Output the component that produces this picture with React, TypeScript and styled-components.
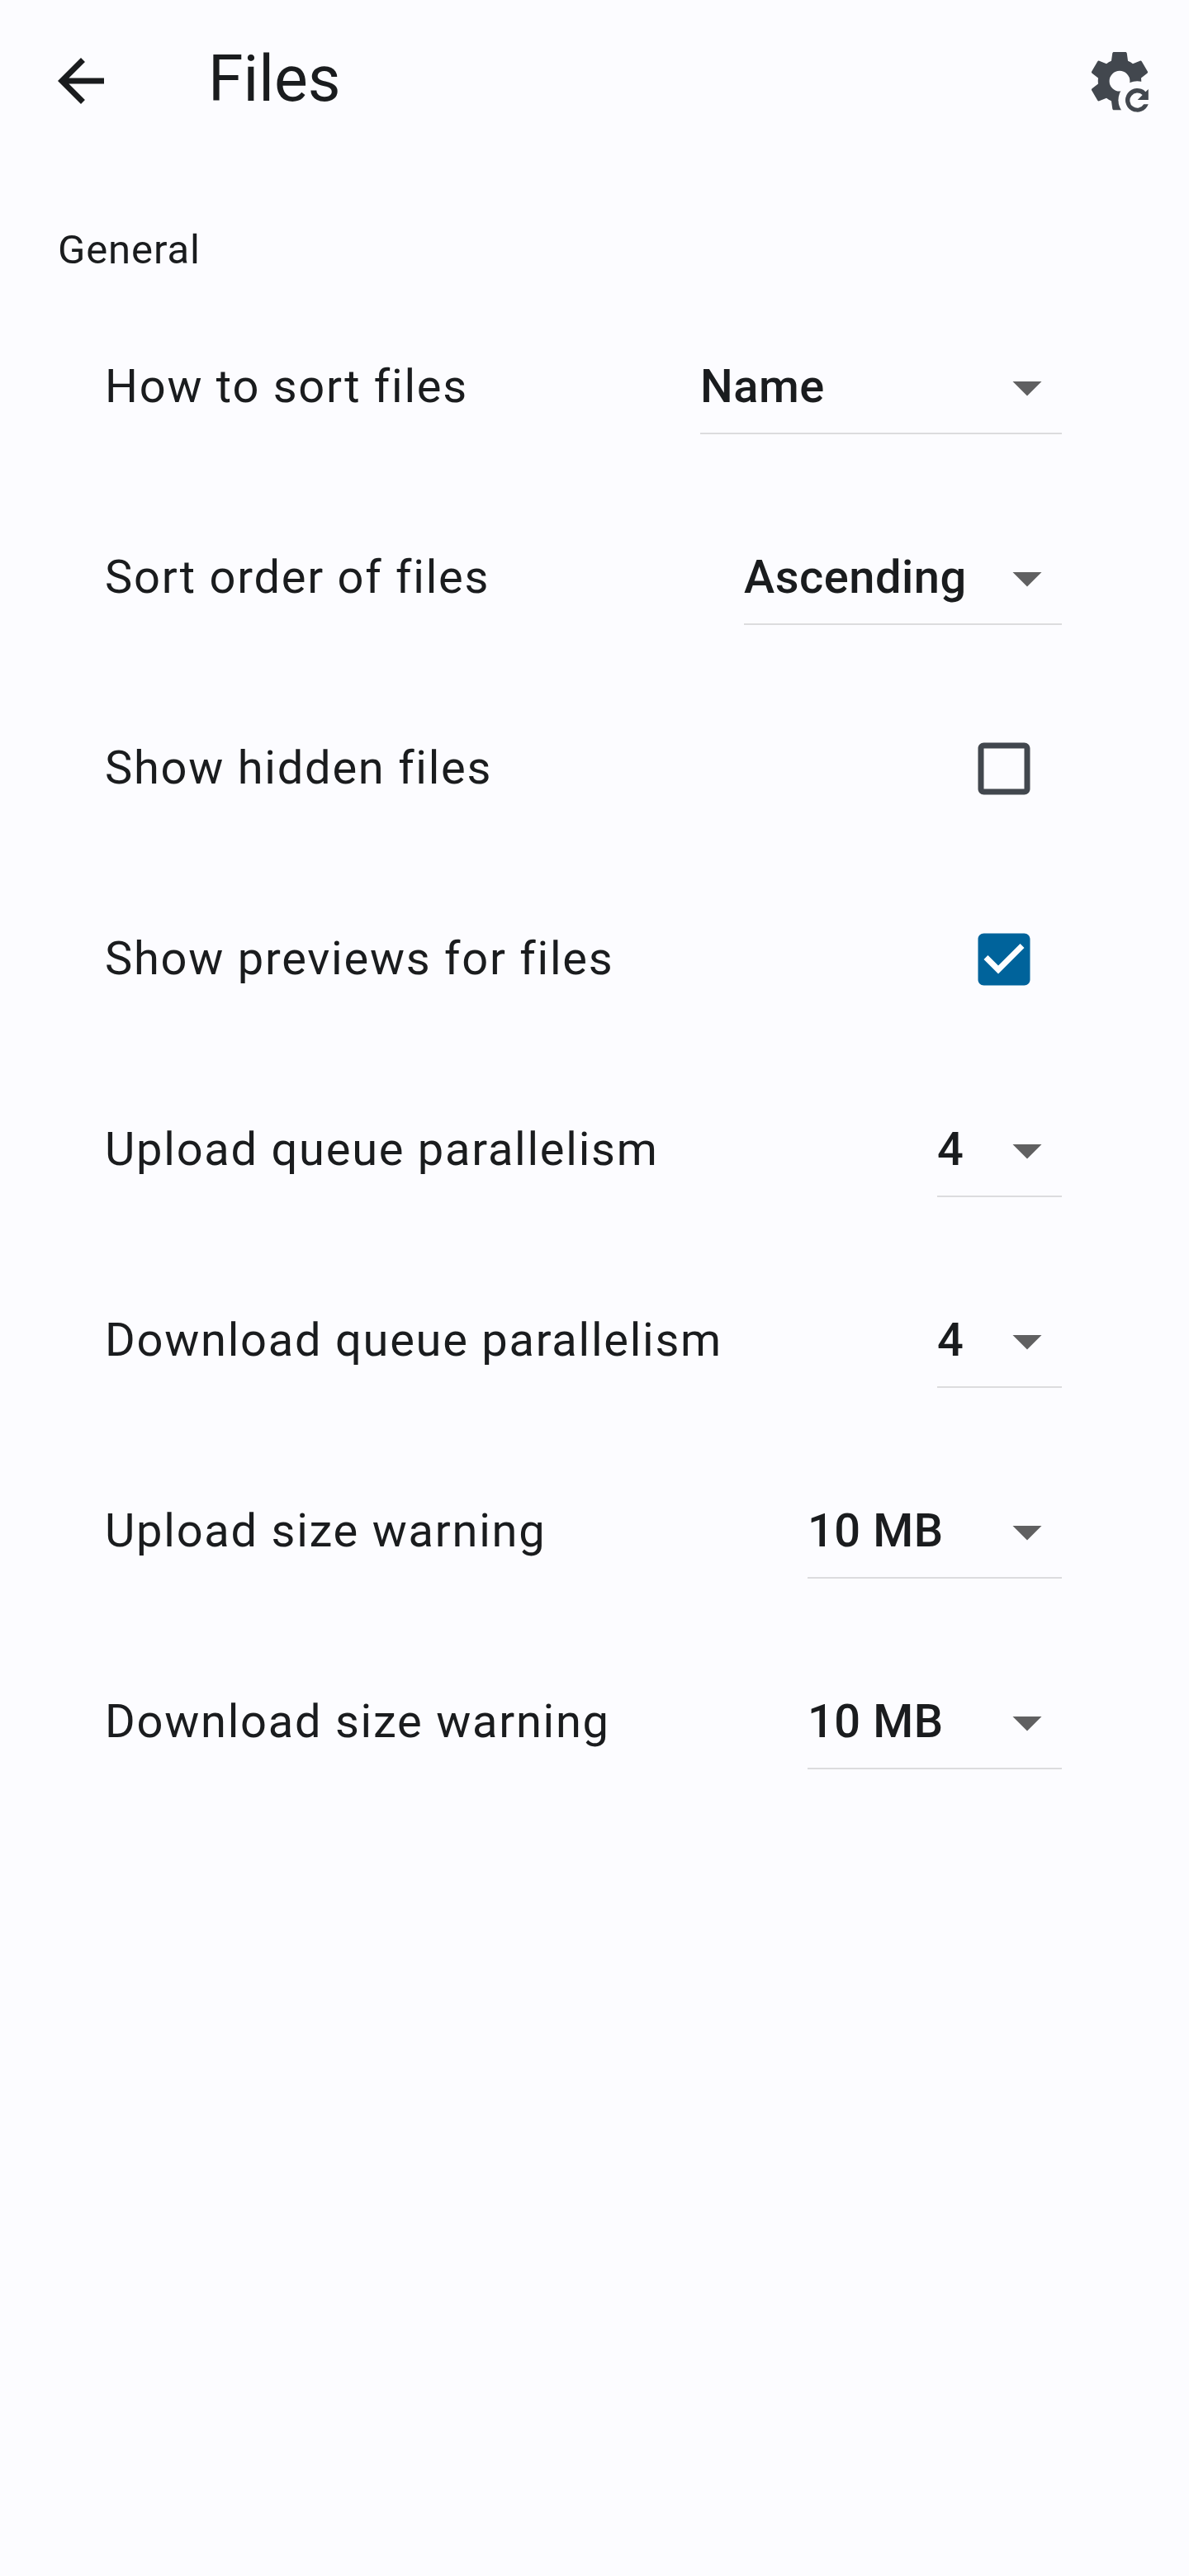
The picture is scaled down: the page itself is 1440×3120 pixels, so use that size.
import React from 'react';
import styled, { createGlobalStyle } from 'styled-components';

const Global = createGlobalStyle`
  * { box-sizing: border-box; }
  body { margin: 0; background: #fcfcff; font-family: Roboto, sans-serif; color: #1a1c1e; }
`;
const Screen = styled.main`
  width: 1440px; height: 3120px; background: #fcfcff; display: flex; flex-direction: column;
`;
const TopBar = styled.header`
  height: 196px; display: flex; align-items: center; padding: 0 42px 0 56px;
`;
const BarIcon = styled.svg`width: 84px; height: 84px; flex: none;`;
const Title = styled.h1`
  margin: 0 auto 0 112px; padding-bottom: 4px; font-size: 77px; font-weight: 400; line-height: 98px;
`;
const Section = styled.h2`
  margin: 0; height: 158px; padding: 79px 0 0 70px; font-size: 49px; font-weight: 400; line-height: 56px; letter-spacing: 0.875px;
`;
const Row = styled.div`
  height: 231px; display: flex; justify-content: space-between; align-items: center; padding: 0 154px 0 127px;
`;
const Label = styled.span`padding-bottom: 3px; font-size: 56px; line-height: 84px; letter-spacing: 1.75px;`;
const Select = styled.div<{ $width: number }>`
  width: ${p => p.$width}px; height: 114px; margin-bottom: 1px; display: flex; justify-content: space-between; align-items: center;
  border-bottom: 2px solid #dcdcde;
`;
const Value = styled.span`font-size: 56px; line-height: 84px; font-weight: 500; letter-spacing: 0.525px; white-space: nowrap;`;
const Arrow = styled.svg`width: 84px; height: 84px; flex: none; margin-top: 2px; fill: #606061;`;
const Check = styled.svg`width: 84px; height: 84px; margin: 0 28px 1px 0;`;

const rows = [
  { label: 'How to sort files', value: 'Name', width: 438 },
  { label: 'Sort order of files', value: 'Ascending', width: 385 },
  { label: 'Show hidden files', checked: false },
  { label: 'Show previews for files', checked: true },
  { label: 'Upload queue parallelism', value: '4', width: 151 },
  { label: 'Download queue parallelism', value: '4', width: 151 },
  { label: 'Upload size warning', value: '10 MB', width: 308 },
  { label: 'Download size warning', value: '10 MB', width: 308 },
];

function CheckIcon({ checked }: { checked?: boolean }) {
  return (
    <Check viewBox="0 0 24 24">
      {checked ? (
        <>
          <path fill="#fff" d="M4 5h16v13H4z" />
          <path fill="#00639b" d="M19 3H5c-1.11 0-2 .9-2 2v14c0 1.1.89 2 2 2h14c1.11 0 2-.9 2-2V5c0-1.1-.89-2-2-2zm-9 14-5-5 1.41-1.41L10 14.17l7.59-7.59L19 8z" />
        </>
      ) : (
        <path fill="#42474e" d="M19 5v14H5V5zm0-2H5c-1.1 0-2 .9-2 2v14c0 1.1.9 2 2 2h14c1.1 0 2-.9 2-2V5c0-1.1-.9-2-2-2z" />
      )}
    </Check>
  );
}

export default function App() {
  return (
    <Screen>
      <Global />
      <TopBar>
        <BarIcon viewBox="0 0 24 24"><path fill="#1a1c1e" d="M20 11H7.83l5.59-5.59L12 4l-8 8 8 8 1.41-1.41L7.83 13H20z" /></BarIcon>
        <Title>Files</Title>
        <BarIcon viewBox="0 0 24 24" fill="#42474e">
          <path d="M12 15.6A3.55 3.55 0 1 1 12 8.5A3.55 3.55 0 0 1 12 15.6M19.43 13L19.5 12L19.43 11L21.54 9.37C21.73 9.22 21.78 8.95 21.66 8.73L19.66 5.27C19.54 5.05 19.27 4.96 19.05 5.05L16.56 6.05C16.04 5.66 15.5 5.32 14.87 5.07L14.5 2.42C14.46 2.18 14.25 2 14 2H10C9.75 2 9.54 2.18 9.5 2.42L9.13 5.07C8.5 5.32 7.96 5.66 7.44 6.05L4.95 5.05C4.73 4.96 4.46 5.05 4.34 5.27L2.34 8.73C2.21 8.95 2.27 9.22 2.46 9.37L4.57 11L4.5 12L4.57 13L2.46 14.63C2.27 14.78 2.21 15.05 2.34 15.27L4.34 18.73C4.46 18.95 4.73 19.03 4.95 18.95L7.44 17.94C7.96 18.34 8.5 18.68 9.13 18.93L9.5 21.58C9.54 21.82 9.75 22.1 10 22.1H14Z" />
          <circle cx="18.1" cy="18.65" r="6.55" fill="#fcfcff" />
          <path d="M21.95 14.85V18.6H18.2L19.9 16.85A2.6 2.6 0 1 0 20.35 20.1H21.93A4.1 4.1 0 1 1 20.98 15.75Z" />
        </BarIcon>
      </TopBar>
      <Section>General</Section>
      {rows.map(r => (
        <Row key={r.label}>
          <Label>{r.label}</Label>
          {r.value ? (
            <Select $width={r.width!}>
              <Value>{r.value}</Value>
              <Arrow viewBox="0 0 24 24"><path d="M7 10l5 5 5-5z" /></Arrow>
            </Select>
          ) : (
            <CheckIcon checked={r.checked} />
          )}
        </Row>
      ))}
    </Screen>
  );
}
